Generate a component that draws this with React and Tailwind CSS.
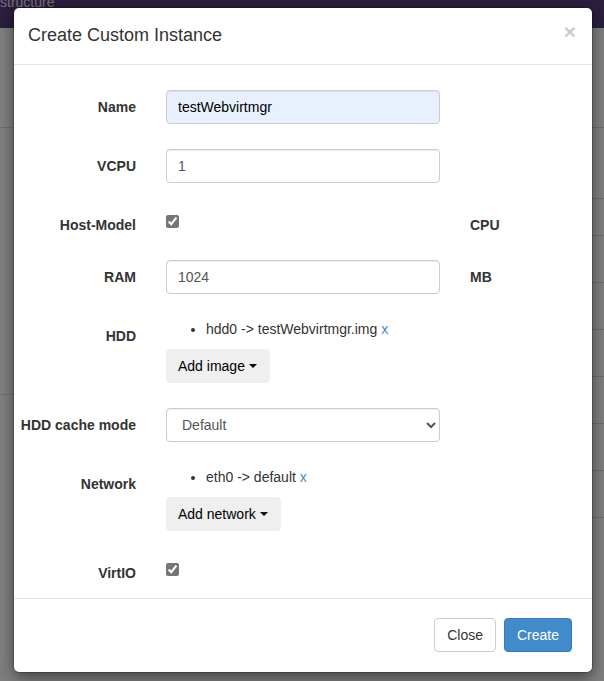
import React from "react";

const control =
  "block h-[34px] w-full rounded border border-[#ccc] px-[11px] text-sm leading-5 text-[#555] shadow-[inset_0_1px_1px_rgba(0,0,0,0.075)] outline-none";

function Row({ label, htmlFor, unit, children }) {
  return (
    <div className="grid grid-cols-[122px_1fr_122px] items-start gap-[30px]">
      <label htmlFor={htmlFor} className="whitespace-nowrap pt-[7px] text-right font-bold">
        {label}
      </label>
      {children}
      {unit && <span className="pt-[7px] font-bold">{unit}</span>}
    </div>
  );
}

function DeviceList({ id, item, action }) {
  return (
    <div>
      <ul className="mb-2.5 list-disc pl-10">
        <li>
          {item}{" "}
          <a href="#remove" className="text-[#428bca]">
            x
          </a>
        </li>
      </ul>
      <button
        id={id}
        type="button"
        className="flex h-[34px] items-center rounded bg-[#efefef] pr-[13px] pl-3 text-black"
      >
        {action}
        <span className="ml-1 border-x-4 border-t-4 border-x-transparent border-t-black" />
      </button>
    </div>
  );
}

function Checkbox({ id }) {
  return (
    <input id={id} type="checkbox" defaultChecked className="mt-[7px] size-[13px] accent-[#767676]" />
  );
}

function PageBehind() {
  return (
    <div aria-hidden="true" className="min-h-screen bg-white">
      <div className="h-7 bg-[#563d7c] text-sm leading-1 text-[#e8e0f4]">structure</div>
      <div className="h-[100px] border-b border-[#ddd]" />
      <div className="flex justify-between">
        <div className="h-[267px] w-1/4 border-b border-[#ddd]" />
        <div className="w-1/4">
          <div className="h-[71px] border-b border-[#ddd]" />
          <div className="h-[37px] border-b border-[#ddd]" />
          <div className="h-[47px] border-b border-[#ddd]" />
          <div className="h-[47px] border-b border-[#ddd]" />
          <div className="h-[47px] border-b border-[#ddd]" />
          <div className="h-[47px] border-b border-[#ddd]" />
          <div className="h-[47px] border-b border-[#ddd]" />
          <div className="h-[47px] border-b border-[#ddd]" />
        </div>
      </div>
    </div>
  );
}

export default function App() {
  return (
    <div className="relative min-h-screen overflow-hidden font-['Liberation_Sans',Arial,sans-serif] text-sm leading-5 text-[#333]">
      <PageBehind />
      <div className="absolute inset-0 bg-black/50 pt-2 pr-3 pl-3.5">
        <form
          role="dialog"
          aria-labelledby="title"
          className="rounded-[5px] bg-white shadow-[0_0_0_1px_rgba(0,0,0,0.2),0_5px_15px_rgba(0,0,0,0.5)]"
        >
          <header className="flex items-start justify-between border-b border-[#e5e5e5] pt-[15px] pr-4 pb-[17px] pl-3.5">
            <h4 id="title" className="text-lg leading-6">
              Create Custom Instance
            </h4>
            <button
              type="button"
              aria-label="Close dialog"
              className="text-[21px] leading-[18px] font-bold text-[#ccc]"
            >
              ×
            </button>
          </header>

          <div className="flex flex-col gap-[25px] pt-[25px] pb-[15px]">
            <Row label="Name" htmlFor="name">
              <input
                id="name"
                type="text"
                defaultValue="testWebvirtmgr"
                className={control + " bg-[#e8f0fe] text-black"}
              />
            </Row>
            <Row label="VCPU" htmlFor="vcpu">
              <input id="vcpu" type="text" defaultValue="1" className={control} />
            </Row>
            <Row label="Host-Model" htmlFor="host-model" unit="CPU">
              <Checkbox id="host-model" />
            </Row>
            <Row label="RAM" htmlFor="ram" unit="MB">
              <input id="ram" type="text" defaultValue="1024" className={control} />
            </Row>
            <Row label="HDD" htmlFor="add-image">
              <DeviceList id="add-image" item="hdd0 -> testWebvirtmgr.img" action="Add image" />
            </Row>
            <Row label="HDD cache mode" htmlFor="cache">
              <select id="cache" className={control + " bg-white"}>
                <option>Default</option>
              </select>
            </Row>
            <Row label="Network" htmlFor="add-network">
              <DeviceList id="add-network" item="eth0 -> default" action="Add network" />
            </Row>
            <Row label="VirtIO" htmlFor="virtio">
              <Checkbox id="virtio" />
            </Row>
          </div>

          <footer className="flex justify-end gap-2 border-t border-[#e5e5e5] px-5 pt-[19px] pb-5">
            <button type="button" className="h-[34px] rounded border border-[#ccc] bg-white px-3">
              Close
            </button>
            <button
              type="submit"
              className="h-[34px] rounded border border-[#357ebd] bg-[#428bca] px-3 text-white"
            >
              Create
            </button>
          </footer>
        </form>
      </div>
    </div>
  );
}
